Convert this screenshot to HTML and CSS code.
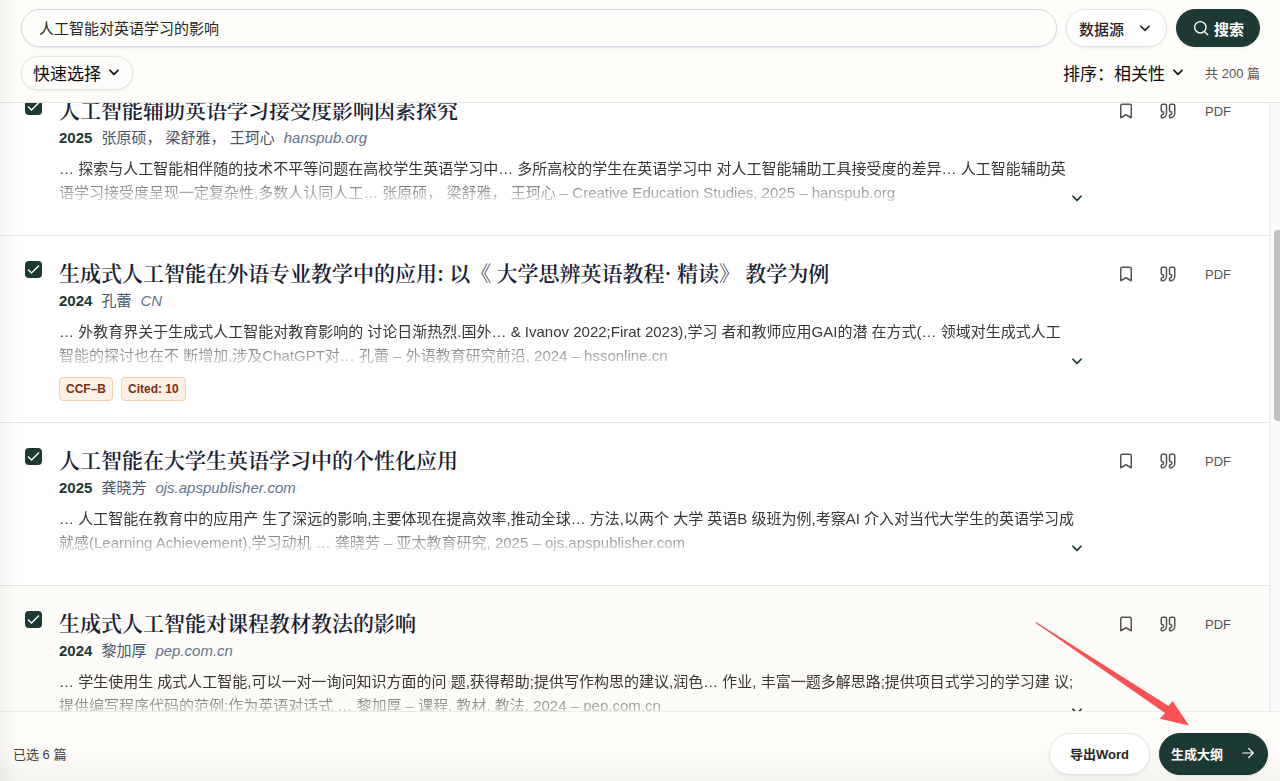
FILE: index.html
```html
<!DOCTYPE html>
<html lang="zh-CN">
<head>
  <meta charset="UTF-8" />
  <meta name="viewport" content="width=device-width, initial-scale=1.0" />
  <title>人工智能对英语学习的影响</title>
  <link rel="stylesheet" href="styles.css">
</head>
<body>

  <!-- Shared icons -->
  <svg class="sprite" width="0" height="0" aria-hidden="true">
    <symbol id="i-down" viewBox="0 0 24 24"><path d="m5 9 7 7 7-7" /></symbol>
    <symbol id="i-search" viewBox="0 0 24 24"><circle cx="11" cy="11" r="8.5" /><path d="m22 22-4.8-4.8" /></symbol>
    <symbol id="i-bookmark" viewBox="0 0 24 24"><path d="m19 21-7-4-7 4V5a2 2 0 0 1 2-2h10a2 2 0 0 1 2 2z" /></symbol>
    <symbol id="i-quote" viewBox="0 0 24 24">
      <path d="M16 3a2 2 0 0 0-2 2v6a2 2 0 0 0 2 2 1 1 0 0 1 1 1v1a2 2 0 0 1-2 2 1 1 0 0 0-1 1v2a1 1 0 0 0 1 1 6 6 0 0 0 6-6V5a2 2 0 0 0-2-2z" />
      <path d="M5 3a2 2 0 0 0-2 2v6a2 2 0 0 0 2 2 1 1 0 0 1 1 1v1a2 2 0 0 1-2 2 1 1 0 0 0-1 1v2a1 1 0 0 0 1 1 6 6 0 0 0 6-6V5a2 2 0 0 0-2-2z" />
    </symbol>
    <symbol id="i-arrow" viewBox="0 0 24 24"><path d="M3 12h18m-8-8 8 8-8 8" /></symbol>
  </svg>

  <header class="topbar">
    <form class="search-row">
      <input class="search-input" type="text" aria-label="搜索" value="人工智能对英语学习的影响" />
      <button class="btn source-btn" type="button">数据源 <svg class="icon"><use href="#i-down" /></svg></button>
      <button class="btn search-btn" type="submit"><svg class="icon"><use href="#i-search" /></svg> 搜索</button>
    </form>
    <div class="filter-row">
      <button class="btn quick-btn" type="button">快速选择 <svg class="icon"><use href="#i-down" /></svg></button>
      <button class="sort-btn" type="button">排序：相关性 <svg class="icon"><use href="#i-down" /></svg></button>
      <span class="total">共 200 篇</span>
    </div>
  </header>

  <div class="content">
    <main class="results">
      <article class="paper">
        <input class="check" type="checkbox" aria-label="选择论文" checked />
        <div class="info">
          <h2 class="title">人工智能辅助英语学习接受度影响因素探究</h2>
          <p class="meta"><b>2025</b><span>张原硕， 梁舒雅， 王珂心</span><i>hanspub.org</i></p>
          <div class="abstract">
            <p>… 探索与人工智能相伴随的技术不平等问题在高校学生英语学习中… 多所高校的学生在英语学习中 对人工智能辅助工具接受度的差异… 人工智能辅助英<br>语学习接受度呈现一定复杂性,多数人认同人工… 张原硕， 梁舒雅， 王珂心 – Creative Education Studies, 2025 – hanspub.org</p>
            <button class="more" type="button" aria-label="展开"><svg class="icon"><use href="#i-down" /></svg></button>
          </div>
        </div>
        <div class="actions">
          <button type="button" aria-label="收藏"><svg class="icon"><use href="#i-bookmark" /></svg></button>
          <button type="button" aria-label="引用"><svg class="icon"><use href="#i-quote" /></svg></button>
          <a href="#">PDF</a>
        </div>
      </article>

      <article class="paper">
        <input class="check" type="checkbox" aria-label="选择论文" checked />
        <div class="info">
          <h2 class="title">生成式人工智能在外语专业教学中的应用: 以《 大学思辨英语教程· 精读》 教学为例</h2>
          <p class="meta"><b>2024</b><span>孔蕾</span><i>CN</i></p>
          <div class="abstract">
            <p>… 外教育界关于生成式人工智能对教育影响的 讨论日渐热烈.国外… &amp; Ivanov 2022;Firat 2023),学习 者和教师应用GAI的潜 在方式(… 领域对生成式人工<br>智能的探讨也在不 断增加,涉及ChatGPT对… 孔蕾 – 外语教育研究前沿, 2024 – hssonline.cn</p>
            <button class="more" type="button" aria-label="展开"><svg class="icon"><use href="#i-down" /></svg></button>
          </div>
          <div class="tags"><span class="tag">CCF–B</span><span class="tag">Cited: 10</span></div>
        </div>
        <div class="actions">
          <button type="button" aria-label="收藏"><svg class="icon"><use href="#i-bookmark" /></svg></button>
          <button type="button" aria-label="引用"><svg class="icon"><use href="#i-quote" /></svg></button>
          <a href="#">PDF</a>
        </div>
      </article>

      <article class="paper">
        <input class="check" type="checkbox" aria-label="选择论文" checked />
        <div class="info">
          <h2 class="title">人工智能在大学生英语学习中的个性化应用</h2>
          <p class="meta"><b>2025</b><span>龚晓芳</span><i>ojs.apspublisher.com</i></p>
          <div class="abstract">
            <p>… 人工智能在教育中的应用产 生了深远的影响,主要体现在提高效率,推动全球… 方法,以两个 大学 英语B 级班为例,考察AI 介入对当代大学生的英语学习成<br>就感(Learning Achievement),学习动机 … 龚晓芳 – 亚太教育研究, 2025 – ojs.apspublisher.com</p>
            <button class="more" type="button" aria-label="展开"><svg class="icon"><use href="#i-down" /></svg></button>
          </div>
        </div>
        <div class="actions">
          <button type="button" aria-label="收藏"><svg class="icon"><use href="#i-bookmark" /></svg></button>
          <button type="button" aria-label="引用"><svg class="icon"><use href="#i-quote" /></svg></button>
          <a href="#">PDF</a>
        </div>
      </article>

      <article class="paper active">
        <input class="check" type="checkbox" aria-label="选择论文" checked />
        <div class="info">
          <h2 class="title">生成式人工智能对课程教材教法的影响</h2>
          <p class="meta"><b>2024</b><span>黎加厚</span><i>pep.com.cn</i></p>
          <div class="abstract">
            <p>… 学生使用生 成式人工智能,可以一对一询问知识方面的问 题,获得帮助;提供写作构思的建议,润色… 作业, 丰富一题多解思路;提供项目式学习的学习建 议;<br>提供编写程序代码的范例;作为英语对话式 … 黎加厚 – 课程. 教材. 教法, 2024 – pep.com.cn</p>
            <button class="more" type="button" aria-label="展开"><svg class="icon"><use href="#i-down" /></svg></button>
          </div>
        </div>
        <div class="actions">
          <button type="button" aria-label="收藏"><svg class="icon"><use href="#i-bookmark" /></svg></button>
          <button type="button" aria-label="引用"><svg class="icon"><use href="#i-quote" /></svg></button>
          <a href="#">PDF</a>
        </div>
      </article>
    </main>
    <div class="scrollbar" aria-hidden="true"><div class="thumb"></div></div>
  </div>

  <footer class="bottombar">
    <span class="selected">已选 6 篇</span>
    <button class="btn export-btn" type="button">导出Word</button>
    <button class="btn outline-btn" type="button">生成大纲 <svg class="icon"><use href="#i-arrow" /></svg></button>
  </footer>

  <!-- Arrow pointing at the outline button -->
  <svg class="pointer" viewBox="0 0 155 104" aria-hidden="true">
    <path d="M0 0.500 1 0 133.500 84 137.500 79 154 103.500 125 96.700 130 91Z" />
  </svg>

</body>
</html>
```
FILE: styles.css
```css
* {
  box-sizing: border-box;
}
body {
  margin: 0;
  height: 100vh;
  display: flex;
  flex-direction: column;
  overflow: hidden;
  position: relative;
  background: #fefdf9;
  color: #292524;
  font-family: "Liberation Sans", "Noto Sans CJK SC", sans-serif;
  font-size: 15px;
}
/* soft shade along the left edge */
body::after {
  content: "";
  position: absolute;
  inset: 0 auto 0 0;
  width: 20px;
  background: linear-gradient(to right, rgba(0, 0, 0, 0.04), transparent);
  pointer-events: none;
}
button,
input {
  font: inherit;
  color: inherit;
  margin: 0;
}
button {
  background: none;
  border: none;
  padding: 0;
  cursor: pointer;
}
.sprite {
  position: absolute;
}
.icon {
  width: 14px;
  height: 14px;
  flex: none;
  fill: none;
  stroke: currentColor;
  stroke-width: 2;
  stroke-linecap: round;
  stroke-linejoin: round;
}
.btn {
  display: flex;
  align-items: center;
  justify-content: center;
  border: 1px solid #e7e5e0;
  border-radius: 24px;
  white-space: nowrap;
  box-shadow: 0 1px 3px rgba(0, 0, 0, 0.08);
}

/* Top bar */
.topbar {
  padding: 9px 20px 12px 21px;
  border-bottom: 1px solid #e9e5de;
}
.search-row {
  display: flex;
  gap: 9px;
  margin-bottom: 9px;
}
.search-input {
  flex: 1;
  min-width: 0;
  height: 38px;
  padding: 0 17px 2px;
  border: 1px solid #d5dae3;
  border-radius: 19px;
  background: #fefefa;
  box-shadow: 0 1px 2px rgba(60, 80, 120, 0.12);
}
.source-btn {
  gap: 14px;
  padding: 0 14px 0 12px;
  background: #fff;
  font-weight: 500;
}
.search-btn {
  gap: 5px;
  padding: 0 15px 0 16px;
  border-color: #1c3a33;
  background: #1c3a33;
  color: #fff;
  font-weight: 700;
}
.search-btn .icon {
  width: 16px;
  height: 16px;
}
.filter-row {
  display: flex;
  align-items: center;
  color: #0c0a09;
  font-size: 17px;
}
.quick-btn {
  gap: 6px;
  height: 34px;
  padding: 0 11px 2px;
  background: #fefdfb;
}
.sort-btn {
  display: flex;
  align-items: center;
  gap: 6px;
  margin-left: auto;
  padding-bottom: 2px;
}
.total {
  margin-left: 20px;
  padding-bottom: 2px;
  color: #57534e;
  font-size: 13px;
}

/* Results */
.content {
  flex: 1;
  min-height: 0;
  display: flex;
  overflow: hidden;
  background: #fff;
}
.results {
  flex: 1;
  min-width: 0;
  margin-top: -30px; /* list is scrolled part way into the first paper */
}
.paper {
  display: flex;
  align-items: flex-start;
  padding: 21px 38px 21px 25px;
  border-bottom: 1px solid #e7e6df;
}
.paper.active {
  background: #fdfcf8;
}
.check {
  appearance: none;
  flex: none;
  width: 17px;
  height: 17px;
  margin-top: 4px;
  border-radius: 4px;
  background: #1c3a33 url("data:image/svg+xml,%3Csvg xmlns='http://www.w3.org/2000/svg' viewBox='0 0 17 17' fill='none' stroke='white' stroke-width='1.300'%3E%3Cpath d='m3 8.500 3.500 3.500L14 4.500'/%3E%3C/svg%3E");
}
.info {
  flex: 1;
  min-width: 0;
  margin: 0 33px 0 17px;
}
.title {
  margin: 0;
  color: #172033;
  font-family: "Noto Serif CJK SC", "Noto Sans CJK SC", serif;
  font-size: 21px;
  font-weight: 600;
  line-height: 30px;
}
.meta {
  display: flex;
  gap: 9px;
  margin: 3px 0 8px;
  color: #475569;
  line-height: 22px;
}
.meta b {
  color: #1c3a33;
}
.meta i {
  color: #64748b;
}
.abstract {
  position: relative;
  margin-bottom: 9px;
}
.abstract p {
  margin: 0;
  line-height: 24px;
  white-space: nowrap;
  color: #3a3633;
  -webkit-mask-image: linear-gradient(to bottom, #000 45%, rgba(0, 0, 0, 0.7) 55%, rgba(0, 0, 0, 0.1));
  mask-image: linear-gradient(to bottom, #000 45%, rgba(0, 0, 0, 0.7) 55%, rgba(0, 0, 0, 0.1));
}
.more {
  display: flex;
  position: absolute;
  right: 0;
  bottom: 0;
  color: #1c3a33;
}
.tags {
  display: flex;
  gap: 8px;
}
.tag {
  padding: 0 6px;
  border: 1px solid #f6cfae;
  border-radius: 4px;
  background: #fef1e6;
  color: #7c2d12;
  font-size: 12px;
  font-weight: 700;
  line-height: 22px;
}
.actions {
  display: flex;
  align-items: center;
  gap: 24px;
  height: 34px;
  color: #57534e;
}
.actions button {
  display: flex;
}
.actions .icon {
  width: 18px;
  height: 18px;
}
.actions a {
  margin-left: 4px;
  color: inherit;
  font-size: 13px;
  text-decoration: none;
}
.more .icon,
.source-btn .icon,
.filter-row .icon {
  stroke-width: 3;
}
.scrollbar {
  width: 11px;
  padding: 127px 0 0 3px;
  border-left: 2px solid #efefef;
  background: #fafafa;
}
.thumb {
  height: 191px;
  border-radius: 4px 0 0 4px;
  background: #c1c1c1;
}

/* Bottom bar */
.bottombar {
  display: flex;
  align-items: center;
  gap: 9px;
  padding: 21px 12px 6px 13px;
  border-top: 1px solid #edebe6;
  background: linear-gradient(to bottom, #fefdf9 50%, #f4f3f0);
  font-size: 13px;
}
.selected {
  flex: 1;
  padding-bottom: 2px;
  color: #44403c;
}
.bottombar .btn {
  height: 42px;
  padding-bottom: 2px;
  font-weight: 700;
}
.export-btn {
  padding: 0 20px;
  background: #fff;
}
.outline-btn {
  gap: 18px;
  padding: 0 12px 0 11px;
  border-color: #1c3a33;
  background: #1c3a33;
  color: #fff;
}
.pointer {
  position: absolute;
  right: 90px;
  bottom: 55px;
  width: 155px;
  height: 104px;
  fill: #fb5152;
}
```
